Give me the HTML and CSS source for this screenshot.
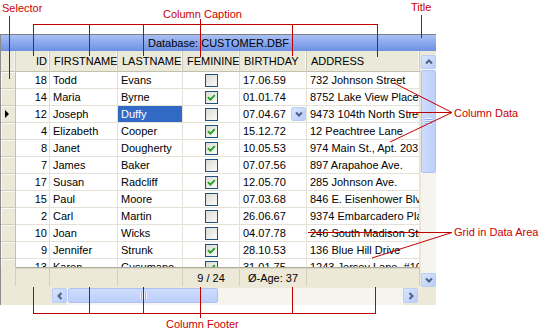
FILE: index.html
```html
<!DOCTYPE html>
<html lang="en">
<head>
<meta charset="UTF-8" />
<title>DBGrid parts</title>
<link rel="stylesheet" href="styles.css">
</head>
<body>
<div class="page">

  <div class="dbgrid">
    <div class="caption">Database: CUSTOMER.DBF</div>
    <div class="frame">

      <div class="head row">
        <div class="c sel"></div>
        <div class="c id">ID</div>
        <div class="c first">FIRSTNAME</div>
        <div class="c last">LASTNAME</div>
        <div class="c fem">FEMININE</div>
        <div class="c birth">BIRTHDAY</div>
        <div class="c addr">ADDRESS</div>
      </div>

      <div class="data">
        <div class="row"><div class="c sel"></div><div class="c id">18</div><div class="c first">Todd</div><div class="c last">Evans</div><div class="c fem"><span class="chk"></span></div><div class="c birth">17.06.59</div><div class="c addr">732 Johnson Street</div></div>
        <div class="row"><div class="c sel"></div><div class="c id">14</div><div class="c first">Maria</div><div class="c last">Byrne</div><div class="c fem"><span class="chk"><svg width="11" height="11" viewBox="0 0 11 11"><path d="M2 5.2 L4.4 7.6 L8.8 3.2" /></svg></span></div><div class="c birth">01.01.74</div><div class="c addr">8752 Lake View Place</div></div>
        <div class="row"><div class="c sel"><span class="ind"></span></div><div class="c id">12</div><div class="c first">Joseph</div><div class="c last cur">Duffy</div><div class="c fem"><span class="chk"></span></div><div class="c birth edit">07.04.67<span class="sbtn drop"><svg width="8" height="6" viewBox="0 0 8 6"><polyline points="1,1.5 4,4.5 7,1.5" /></svg></span></div><div class="c addr">9473 104th North Street</div></div>
        <div class="row"><div class="c sel"></div><div class="c id">4</div><div class="c first">Elizabeth</div><div class="c last">Cooper</div><div class="c fem"><span class="chk"><svg width="11" height="11" viewBox="0 0 11 11"><path d="M2 5.2 L4.4 7.6 L8.8 3.2" /></svg></span></div><div class="c birth">15.12.72</div><div class="c addr">12 Peachtree Lane</div></div>
        <div class="row"><div class="c sel"></div><div class="c id">8</div><div class="c first">Janet</div><div class="c last">Dougherty</div><div class="c fem"><span class="chk"><svg width="11" height="11" viewBox="0 0 11 11"><path d="M2 5.2 L4.4 7.6 L8.8 3.2" /></svg></span></div><div class="c birth">10.05.53</div><div class="c addr">974 Main St., Apt. 203</div></div>
        <div class="row"><div class="c sel"></div><div class="c id">7</div><div class="c first">James</div><div class="c last">Baker</div><div class="c fem"><span class="chk"></span></div><div class="c birth">07.07.56</div><div class="c addr">897 Arapahoe Ave.</div></div>
        <div class="row"><div class="c sel"></div><div class="c id">17</div><div class="c first">Susan</div><div class="c last">Radcliff</div><div class="c fem"><span class="chk"><svg width="11" height="11" viewBox="0 0 11 11"><path d="M2 5.2 L4.4 7.6 L8.8 3.2" /></svg></span></div><div class="c birth">12.05.70</div><div class="c addr">285 Johnson Ave.</div></div>
        <div class="row"><div class="c sel"></div><div class="c id">15</div><div class="c first">Paul</div><div class="c last">Moore</div><div class="c fem"><span class="chk"></span></div><div class="c birth">07.03.68</div><div class="c addr">846 E. Eisenhower Blvd.</div></div>
        <div class="row"><div class="c sel"></div><div class="c id">2</div><div class="c first">Carl</div><div class="c last">Martin</div><div class="c fem"><span class="chk"></span></div><div class="c birth">26.06.67</div><div class="c addr">9374 Embarcadero Place</div></div>
        <div class="row"><div class="c sel"></div><div class="c id">10</div><div class="c first">Joan</div><div class="c last">Wicks</div><div class="c fem"><span class="chk"></span></div><div class="c birth">04.07.78</div><div class="c addr">246 South Madison Street</div></div>
        <div class="row"><div class="c sel"></div><div class="c id">9</div><div class="c first">Jennifer</div><div class="c last">Strunk</div><div class="c fem"><span class="chk"><svg width="11" height="11" viewBox="0 0 11 11"><path d="M2 5.2 L4.4 7.6 L8.8 3.2" /></svg></span></div><div class="c birth">28.10.53</div><div class="c addr">136 Blue Hill Drive</div></div>
        <div class="row"><div class="c sel"></div><div class="c id">13</div><div class="c first">Karen</div><div class="c last">Cusumano</div><div class="c fem"><span class="chk"><svg width="11" height="11" viewBox="0 0 11 11"><path d="M2 5.2 L4.4 7.6 L8.8 3.2" /></svg></span></div><div class="c birth">31.01.75</div><div class="c addr">1243 Jersey Lane, #10</div></div>
      </div>

      <div class="foot row">
        <div class="c sel"></div>
        <div class="c id"></div>
        <div class="c first"></div>
        <div class="c last"></div>
        <div class="c fem">9 / 24</div>
        <div class="c birth">Ø-Age: 37</div>
        <div class="c addr"></div>
      </div>

      <div class="hbar">
        <span class="sbtn"><svg width="6" height="8" viewBox="0 0 6 8"><polyline points="4.5,1 1.5,4 4.5,7" /></svg></span>
        <div class="track"><div class="thumb hthumb"></div></div>
        <span class="sbtn"><svg width="6" height="8" viewBox="0 0 6 8"><polyline points="1.5,1 4.5,4 1.5,7" /></svg></span>
      </div>

      <div class="vbar">
        <span class="sbtn vbtn"><svg width="8" height="6" viewBox="0 0 8 6"><polyline points="1,4.5 4,1.5 7,4.5" /></svg></span>
        <div class="track vtrack"><div class="thumb vthumb"></div></div>
        <span class="sbtn vbtn"><svg width="8" height="6" viewBox="0 0 8 6"><polyline points="1,1.5 4,4.5 7,1.5" /></svg></span>
      </div>

    </div>
  </div>

  <!-- callout lines -->
  <svg class="notes" width="560" height="334" viewBox="0 0 560 334">
    <path class="sharp" d="M9.5 16 V79" />
    <path class="sharp" d="M33 24.5 H378 M33.5 24 V56 M89.5 24 V56 M143.5 24 V56 M292.5 24 V56 M377.5 24 V57 M200.5 19 V57" />
    <path class="sharp" d="M421.5 15 V38" />
    <path d="M452 112.5 L394 83 M452 112.5 H406 M452 112.5 L390 142" />
    <path d="M452 232.5 H308 M452 232.5 L372 258" />
    <path class="sharp" d="M200.5 287 V318 M33 313.5 H376 M33.5 287 V313 M89.5 287 V313 M143.5 287 V313 M292.5 287 V313 M375.5 287 V313" />
  </svg>

  <span class="note n-selector">Selector</span>
  <span class="note n-caption">Column Caption</span>
  <span class="note n-title">Title</span>
  <span class="note n-data">Column Data</span>
  <span class="note n-area">Grid in Data Area</span>
  <span class="note n-footer">Column Footer</span>

</div>
</body>
</html>
```

FILE: styles.css
```css
body {
  margin: 0;
  background: #fff;
  font-family: "Liberation Sans", Arial, sans-serif;
  font-size: 11px;
  color: #000;
}

.page {
  position: relative;
  width: 560px;
  height: 334px;
  overflow: hidden;
}

/* grid box */
.dbgrid {
  margin-top: 34px;
  width: 435px;
  border-top: 1px solid #7f7f7f;
  border-left: 1px solid #8c8c8c;
  background: #ece9d8;
}

.caption {
  height: 16px;
  line-height: 16px;
  text-align: center;
  background: linear-gradient(#a9c0f3, #87a5ec 55%, #6e90e2);
}

.frame {
  display: grid;
  grid-template-columns: 419px 16px;
  grid-template-rows: 21px 195px 19px 19px;
}

.head { grid-column: 1; grid-row: 1; }
.data { grid-column: 1; grid-row: 2; background: #fff; overflow: hidden; }
.foot { grid-column: 1; grid-row: 3; }
.hbar { grid-column: 1; grid-row: 4; }
.vbar { grid-column: 2; grid-row: 1 / 5; }

.row {
  display: flex;
}

.c {
  box-sizing: border-box;
  flex: none;
  height: 17px;
  line-height: 16px;
  padding: 0 3px;
  border-right: 1px solid #e4e2d6;
  border-bottom: 1px solid #e4e2d6;
  white-space: nowrap;
  overflow: hidden;
}

.sel {
  width: 15px;
  padding: 0 0 0 4px;
  display: flex;
  align-items: center;
  background: #ece9d8;
  border-right-color: #c4c1ae;
  border-bottom-color: #cfccba;
  box-shadow: inset 1px 1px #fbfaf6;
}
.id { width: 34px; text-align: right; padding-right: 2px; }
.first { width: 68px; }
.last { width: 65px; }
.fem { width: 57px; display: flex; align-items: center; justify-content: center; }
.birth { width: 67px; }
.addr { width: 113px; }

/* caption row */
.head .c {
  height: 21px;
  line-height: 20px;
  padding-left: 4px;
  background: #ebe9d9;
  border-right-color: #cdcab8;
  border-bottom-color: #c3c0ad;
  box-shadow: inset -1px 0 #f8f7f1;
}
.head .id { padding-right: 2px; }
.head .fem { display: block; }

/* footer row */
.foot .c {
  height: 19px;
  line-height: 18px;
  padding-top: 1px;
  text-align: center;
  background: #ece9d8;
  border-top: 1px solid #aeab9b;
  border-bottom: none;
  border-right-color: #d2cfbe;
  box-shadow: inset 0 1px #d9d6c6;
}
.foot .sel {
  border-top-color: #ece9d8;
  box-shadow: none;
}
.foot .fem { display: block; }

/* current row and cell */
.ind {
  width: 0;
  height: 0;
  border-left: 4px solid #000;
  border-top: 4px solid transparent;
  border-bottom: 4px solid transparent;
}

.cur {
  background: #316ac5;
  color: #fff;
}

.edit {
  display: flex;
  align-items: center;
  justify-content: space-between;
  padding-right: 0;
}

.chk {
  box-sizing: border-box;
  width: 13px;
  height: 13px;
  border: 1px solid #1c5180;
  background: linear-gradient(135deg, #dcdcd5, #fbfbf8);
  display: flex;
}
.chk svg path {
  fill: none;
  stroke: #21a121;
  stroke-width: 1.9;
}

/* scroll bars */
.sbtn {
  box-sizing: border-box;
  flex: none;
  width: 15px;
  height: 15px;
  border: 1px solid #bccdf5;
  border-radius: 2px;
  background: linear-gradient(135deg, #d9e5fe, #b9cdf9);
  display: flex;
  align-items: center;
  justify-content: center;
}
.sbtn svg polyline {
  fill: none;
  stroke: #4d6185;
  stroke-width: 2;
}
.drop { height: 14px; }

.track {
  flex: 1;
  background: #f5f4ee;
}

.thumb {
  box-sizing: border-box;
  border: 1px solid #aec3f4;
  border-radius: 2px;
  background: linear-gradient(to right, #cddbfd, #bdd0fb);
  display: flex;
  align-items: center;
  justify-content: center;
}

.hbar {
  display: flex;
  box-sizing: border-box;
  padding: 2px 2px 0 51px;
}
.hthumb {
  width: 150px;
  height: 15px;
  margin-left: 1px;
  background: linear-gradient(#cddbfd, #bdd0fb);
}
.hthumb::after {
  content: "";
  width: 7px;
  height: 7px;
  background: repeating-linear-gradient(to right, #eef4fe 0 1px, #8eaef0 1px 2px);
}

.vbar {
  display: flex;
  flex-direction: column;
  box-sizing: border-box;
  padding: 4px 0 18px 1px;
}
.vbtn { height: 14px; }
.vthumb {
  width: 15px;
  height: 103px;
  margin-top: 1px;
}
.vthumb::after {
  content: "";
  width: 7px;
  height: 7px;
  background: repeating-linear-gradient(#eef4fe 0 1px, #8eaef0 1px 2px);
}

/* callouts */
.notes {
  position: absolute;
  left: 0;
  top: 0;
  pointer-events: none;
}
.notes path {
  fill: none;
  stroke: #c00000;
  stroke-width: 1;
}
.notes .sharp {
  shape-rendering: crispEdges;
}

.note {
  position: absolute;
  font-size: 11px;
  line-height: 13px;
  color: #cc0000;
  white-space: nowrap;
}
.n-selector { left: 2px; top: 2px; }
.n-caption { left: 163px; top: 8px; }
.n-title { left: 411px; top: 1px; }
.n-data { left: 454px; top: 107px; }
.n-area { left: 454px; top: 226px; }
.n-footer { left: 166px; top: 318px; }
```
